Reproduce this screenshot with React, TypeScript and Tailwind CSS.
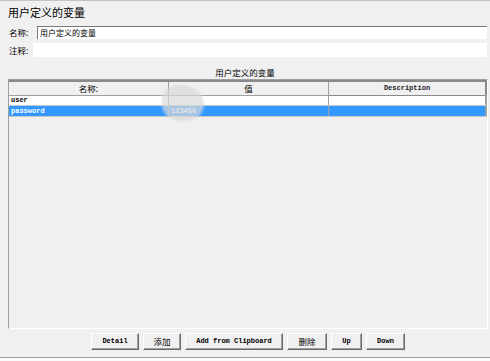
const cjk = "font-['Noto_Sans_CJK_SC','Noto_Sans',sans-serif]"
const mono = "font-['Liberation_Mono',monospace]"

const buttons = [
  { label: 'Detail', width: 'w-[48px]', kind: 'mono' },
  { label: '添加', width: 'w-[38px]', kind: 'cjk' },
  { label: 'Add from Clipboard', width: 'w-[98px]', kind: 'mono' },
  { label: '删除', width: 'w-[40px]', kind: 'cjk' },
  { label: 'Up', width: 'w-[31px]', kind: 'mono' },
  { label: 'Down', width: 'w-[39px]', kind: 'mono' },
]

const rows = [
  { name: 'user', value: '', description: '', selected: false },
  { name: 'password', value: '123456', description: '', selected: true },
]

export default function App() {
  return (
    <div className="flex h-[361px] w-[490px] flex-col overflow-hidden border-t border-[#c4c4c4] bg-[#f0f0f0] text-black">
      <div className={`h-[22px] pl-[8px] pt-[4px] text-[11px] leading-[14px] ${cjk}`}>
        用户定义的变量
      </div>

      <div className="pl-[8px] pr-[3px]">
        <div className="flex h-[17px] items-center pt-[1px]">
          <span className={`w-[29px] pl-[1px] text-[8.5px] leading-[13px] ${cjk}`}>名称:</span>
          <div
            className={`flex h-[13px] flex-1 items-center border-t border-l border-[#7a7a7a] bg-white pl-[2px] text-[8px] ${cjk}`}
          >
            用户定义的变量
          </div>
        </div>
        <div className="flex h-[18px] items-center pt-[2px]">
          <span className={`w-[25px] pl-[1px] text-[8.5px] leading-[13px] ${cjk}`}>注释:</span>
          <div className="h-[14px] flex-1 bg-white" />
        </div>
      </div>

      <div className={`h-[21px] pt-[8px] text-center text-[8.5px] leading-[12px] ${cjk}`}>
        用户定义的变量
      </div>

      <div className="relative mx-[8px] h-[250px] w-[480px] border border-t-[#a0a0a0] border-l-[#a0a0a0] border-b-white border-r-white bg-[#f0f0f0]">
        <div className="grid h-[15px] grid-cols-[160px_160px_1fr] border-t-2 border-[#8a8a8a]">
          <div className={`flex items-center justify-center border-r border-b border-[#a0a0a0] text-[8.5px] ${cjk}`}>
            名称:
          </div>
          <div className={`flex items-center justify-center border-r border-b border-[#a0a0a0] text-[8.5px] ${cjk}`}>
            值
          </div>
          <div
            className={`flex items-center justify-center border-r-2 border-b border-[#8a8a8a] text-[7px] font-bold text-[#2a2230] ${mono}`}
          >
            Description
          </div>
        </div>

        {rows.map((row) => (
          <div
            key={row.name}
            className={`grid h-[11px] grid-cols-[160px_160px_1fr] border-b border-[#c8c8c8] text-[7px] leading-[10px] font-bold ${mono} ${
              row.selected ? 'bg-[#3399ff] text-white' : 'bg-white text-black'
            }`}
          >
            <div className="border-r border-[#a0a0a0] pl-[2px]">{row.name}</div>
            <div className="border-r border-[#a0a0a0] pl-[2px]">{row.value}</div>
            <div className="border-r-2 border-[#a0a0a0]" />
          </div>
        ))}

        <div className="absolute top-[5px] left-[153px] h-[36px] w-[42px] rounded-[40%_55%_45%_45%] bg-[#d8d8d8]/70 blur-[1px]" />
      </div>

      <div className="flex h-[28px] items-start gap-[4px] pl-[91px] pt-[4px]">
        {buttons.map((button) => (
          <button
            key={button.label}
            type="button"
            className={`flex h-[17px] ${button.width} items-center justify-center border border-t-white border-l-white border-b-[#696969] border-r-[#696969] bg-[#f0f0f0] shadow-[inset_-1px_-1px_0_#a0a0a0] ${
              button.kind === 'mono' ? `text-[7px] font-bold ${mono}` : `text-[8.5px] ${cjk}`
            }`}
          >
            {button.label}
          </button>
        ))}
      </div>

      <div className="flex-1 border-t border-[#a0a0a0] bg-[#fafafa]" />
    </div>
  )
}
